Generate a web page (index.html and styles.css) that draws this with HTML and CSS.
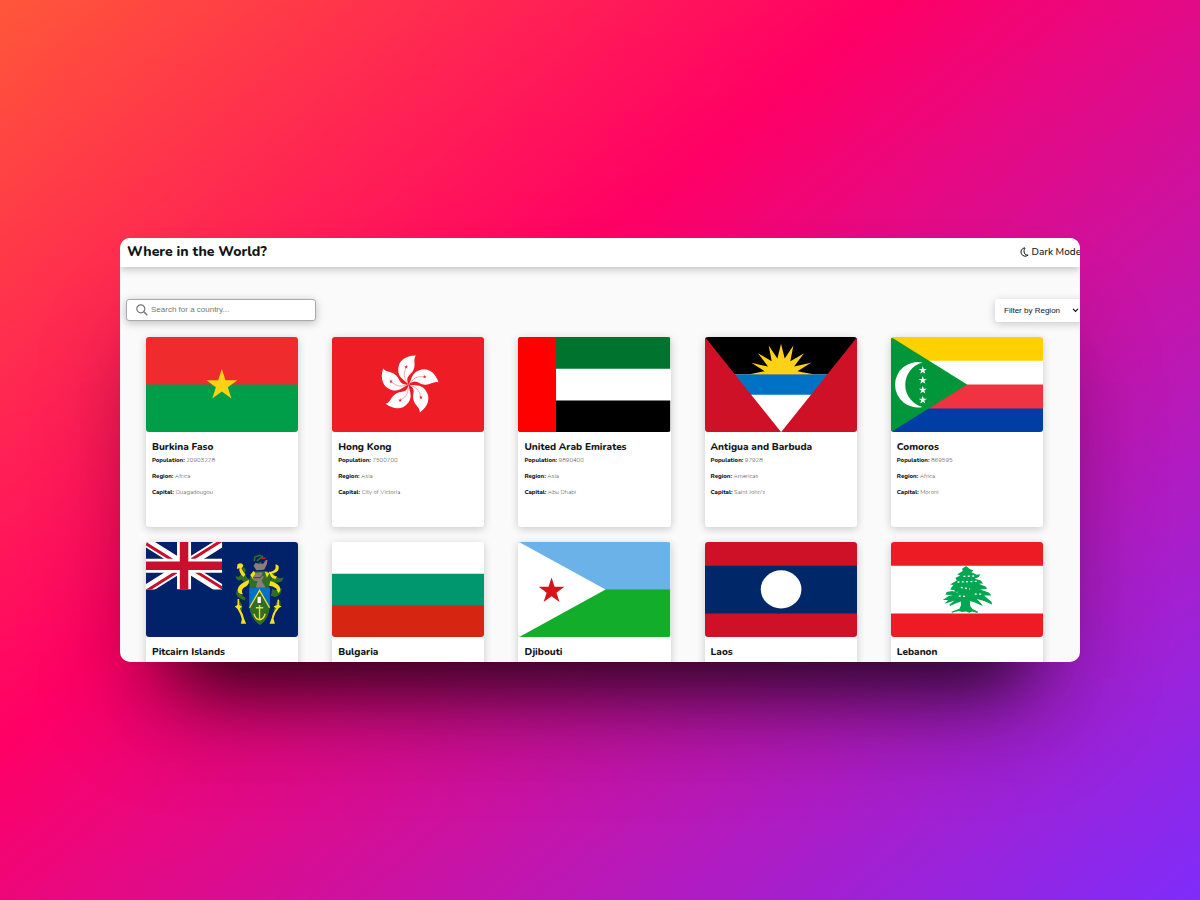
FILE: index.html
```html
<!DOCTYPE html>
<html lang="en">
<head>
<meta charset="utf-8">
<meta name="viewport" content="width=device-width, initial-scale=1">
<title>Where in the World?</title>
<link rel="stylesheet" href="styles.css">
</head>
<body>
<svg class="defs" aria-hidden="true">
  <symbol id="star" viewBox="-10 -10 20 20" overflow="visible">
    <polygon points="0,-10 2.25,-3.1 9.5,-3.1 3.65,1.2 5.9,8.1 0,3.8 -5.9,8.1 -3.65,1.2 -9.5,-3.1 -2.25,-3.1"/>
  </symbol>
</svg>
<div class="window">
  <header class="header">
    <h1 class="title">Where in the World?</h1>
    <button class="mode" type="button">
      <svg class="mode-icon" viewBox="0 0 16 18" aria-hidden="true"><path d="M8 1.500A7.600 7.600 0 1 0 14.500 14.500C8 15.500 5 8 9 2Z" fill="none" stroke="#111517" stroke-width="1.800" stroke-linejoin="round"/></svg>
      Dark Mode
    </button>
  </header>
  <main>
    <form class="controls">
      <label class="search">
        <svg class="search-icon" viewBox="0 0 12 12" aria-hidden="true"><circle cx="4.800" cy="4.800" r="4" fill="none" stroke="#777" stroke-width="1.200"/><path d="M7.800 7.800L11.300 11.300" stroke="#777" stroke-width="1.500"/></svg>
        <input class="search-input" type="text" placeholder="Search for a country..." aria-label="Search for a country">
      </label>
      <div class="filter">
        <select class="filter-select" aria-label="Filter by Region">
          <option>Filter by Region</option><option>Africa</option><option>Americas</option><option>Asia</option><option>Europe</option><option>Oceania</option>
        </select>
        <svg class="filter-arrow" viewBox="0 0 8 6" aria-hidden="true"><path d="M1 1L4 4.200L7 1" fill="none" stroke="#111" stroke-width="1.400"/></svg>
      </div>
    </form>
    <section class="grid">
      <article class="card">
        <svg class="flag" viewBox="0 0 152 95" preserveAspectRatio="none"><path fill="#ef2b2d" d="M0 0H152V48H0Z"/><path fill="#009e49" d="M0 47.500H152V95H0Z"/><use href="#star" x="59.500" y="32" width="32.500" height="32.500" fill="#fcd116"/></svg>
        <div class="info"><h2 class="name">Burkina Faso</h2>
          <p class="fact"><b>Population:</b> 20903278</p><p class="fact"><b>Region:</b> Africa</p><p class="fact"><b>Capital:</b> Ouagadougou</p></div>
      </article>
      <article class="card">
        <svg class="flag" viewBox="0 0 152 95" preserveAspectRatio="none"><path fill="#ee1c25" d="M0 0H152V95H0Z"/>
          <defs><g id="petal"><path fill="#fff" d="M0 0C-3 -4 -10 -6 -10 -14C-10 -23 -3 -28 7 -28C4 -24 7 -20 5 -15C3 -9 -4 -9 0 0Z"/><path d="M0 -1C-5 -6 -5 -11 -2.500 -16" fill="none" stroke="#ee1c25" stroke-width=".35"/><use href="#star" x="-4.300" y="-19" width="4" height="4" fill="#ee1c25"/></g></defs>
          <g transform="translate(76.500 47.500) scale(1.04)"><use href="#petal"/><use href="#petal" transform="rotate(72)"/><use href="#petal" transform="rotate(144)"/><use href="#petal" transform="rotate(216)"/><use href="#petal" transform="rotate(288)"/></g></svg>
        <div class="info"><h2 class="name">Hong Kong</h2>
          <p class="fact"><b>Population:</b> 7500700</p><p class="fact"><b>Region:</b> Asia</p><p class="fact"><b>Capital:</b> City of Victoria</p></div>
      </article>
      <article class="card">
        <svg class="flag" viewBox="0 0 152 95" preserveAspectRatio="none"><path fill="#fff" d="M0 0H152V95H0Z"/><path fill="#00732f" d="M0 0H152V31.600H0Z"/><path d="M0 63.500H152V95H0Z"/><path fill="#f00" d="M0 0H38V95H0Z"/></svg>
        <div class="info"><h2 class="name">United Arab Emirates</h2>
          <p class="fact"><b>Population:</b> 9890400</p><p class="fact"><b>Region:</b> Asia</p><p class="fact"><b>Capital:</b> Abu Dhabi</p></div>
      </article>
      <article class="card">
        <svg class="flag" viewBox="0 0 152 95" preserveAspectRatio="none"><path fill="#fff" d="M0 0H152V95H0Z"/><path d="M0 0H152V37.500H0Z"/><path fill="#0072c6" d="M0 37.400H152V57.700H0Z"/>
          <polygon transform="translate(-194.400 -6.500) scale(.33333)" fill="#fcd116" points="717,131 762,122 722,97 772,108 742,68 783,92 774,45 800,84 811,40 822,84 848,45 839,92 880,68 850,108 901,97 860,122 908,131"/>
          <path fill="#ce1126" d="M0 0L76 95H0ZM152 0L76 95H152Z"/></svg>
        <div class="info"><h2 class="name">Antigua and Barbuda</h2>
          <p class="fact"><b>Population:</b> 97928</p><p class="fact"><b>Region:</b> Americas</p><p class="fact"><b>Capital:</b> Saint John's</p></div>
      </article>
      <article class="card">
        <svg class="flag" viewBox="0 0 152 95" preserveAspectRatio="none"><path fill="#ffd100" d="M0 0H152V24H0Z"/><path fill="#fff" d="M0 23.700H152V48H0Z"/><path fill="#ef3340" d="M0 47.500H152V72H0Z"/><path fill="#003da5" d="M0 71.300H152V95H0Z"/><path fill="#009639" d="M0 0L76 47.500L0 95Z"/>
          <path fill="#fff" d="M31.500 25.500A22.700 22.700 0 1 0 31.500 69.900A22.900 22.900 0 0 1 31.500 25.500Z"/>
          <g fill="#fff"><use href="#star" x="27.500" y="29" width="8.500" height="8.500"/><use href="#star" x="27.500" y="39" width="8.500" height="8.500"/><use href="#star" x="27.500" y="48.700" width="8.500" height="8.500"/><use href="#star" x="27.500" y="58.700" width="8.500" height="8.500"/></g></svg>
        <div class="info"><h2 class="name">Comoros</h2>
          <p class="fact"><b>Population:</b> 869595</p><p class="fact"><b>Region:</b> Africa</p><p class="fact"><b>Capital:</b> Moroni</p></div>
      </article>
      <article class="card">
        <svg class="flag" viewBox="0 0 152 95" preserveAspectRatio="none"><path fill="#012169" d="M0 0H152V95H0Z"/>
          <svg width="76" height="47.500" viewBox="0 0 76 47.500"><path d="M0 0L76 47.500M76 0L0 47.500" stroke="#fff" stroke-width="9.500"/><path d="M-1 1L37 24.750M77 46.500L39 22.750M75 -1L38 22.250M1 48.500L38 25.250" stroke="#c8102e" stroke-width="3"/><path d="M38 0V47.500M0 23.750H76" stroke="#fff" stroke-width="14"/><path d="M38 0V47.500M0 23.750H76" stroke="#c8102e" stroke-width="8.500"/></svg>
          <g transform="translate(79.400 3) scale(.33333)">
            <g fill="#316d24">
              <path d="M50 66Q66 68 58 84Q60 100 74 104L72 116Q56 114 48 104Q34 112 30 94Q44 98 46 88Q52 80 50 66Z"/>
              <path d="M148 78Q142 90 152 94Q162 104 174 96Q172 114 154 112Q138 112 130 118L130 106Q142 102 138 90Z"/>
              <path d="M64 116Q48 122 44 136Q42 148 60 158L58 166Q36 160 32 146Q32 122 64 108ZM40 166Q52 176 50 192L44 204Q40 190 34 182Z"/>
              <path d="M140 132Q156 140 168 128Q170 150 148 156L136 152ZM158 160Q170 172 162 186Q154 188 150 204L144 198Q148 180 158 160Z"/>
            </g>
            <g fill="#f7e017">
              <path d="M36 58Q48 50 54 62L48 70Q52 82 60 88L54 96Q38 82 42 70L34 72Z"/>
              <path d="M150 58Q164 60 158 76Q152 86 140 84Q142 94 154 94L150 102Q132 98 130 80Q144 82 150 70Z"/>
              <path d="M70 112Q68 122 54 128Q46 136 52 148L44 146Q32 140 40 124Q48 114 70 104Z"/>
              <path d="M132 108Q152 112 162 124Q168 136 158 144L152 130Q142 122 130 122Z"/>
              <path d="M36 162H41V180L50 184L43 190Q52 204 56 222L62 236H46L49 222Q44 204 36 192L28 184L36 180Z"/>
              <path d="M156 164H160V180L168 184L160 189Q148 202 144 220L148 236H132L138 220Q142 200 152 190L144 184L155 180Z"/>
            </g>
            <path fill="none" stroke="#316d24" stroke-width="5" d="M86 48L88 36L106 30M94 48L112 32M102 52L114 62"/>
            <path fill="#316d24" d="M72 102L80 80L126 78L136 96L130 128H72Z"/>
            <path fill="#f7e017" d="M74 90L84 78L90 84L84 104ZM118 80L132 84L124 98Z"/>
            <path fill="#897f76" d="M84 62L90 54L112 58L120 46L126 44L124 58L116 74L92 76ZM82 96L92 84L108 82L114 96L108 108L122 130H90L96 108L84 106Z"/>
            <path stroke="#171b26" stroke-width="2" fill="none" d="M84 98L104 98L112 88"/>
            <path fill="#d71920" d="M107 37H119V42H107Z"/>
            <path fill="#0072c6" d="M71 127H133V182C130 214 114 234 103 239C90 232 75 211 71 182Z"/>
            <path fill="#316d24" d="M102 134L132 190C129 216 114 233 103 239C90 232 76 212 72 190Z"/>
            <path fill="none" stroke="#f7e017" stroke-width="4" d="M72 188L102 136L132 188"/>
            <path fill="none" stroke="#f7e017" stroke-width="4" d="M102 180V222M91 188H113M85 206Q90 223 102 224Q114 223 119 206"/>
            <path fill="#fff" d="M96 155H106V174H96Z"/>
          </g></svg>
        <div class="info"><h2 class="name">Pitcairn Islands</h2></div>
      </article>
      <article class="card">
        <svg class="flag" viewBox="0 0 152 95" preserveAspectRatio="none"><path fill="#fff" d="M0 0H152V95H0Z"/><path fill="#00966e" d="M0 31.600H152V64H0Z"/><path fill="#d62612" d="M0 63.300H152V95H0Z"/></svg>
        <div class="info"><h2 class="name">Bulgaria</h2></div>
      </article>
      <article class="card">
        <svg class="flag" viewBox="0 0 152 95" preserveAspectRatio="none"><path fill="#6ab2e7" d="M0 0H152V48H0Z"/><path fill="#12ad2b" d="M0 47.500H152V95H0Z"/><path fill="#fff" d="M0 0H1L87.500 47.500L1 95H0Z"/><use href="#star" x="20" y="35.500" width="27" height="27" fill="#d7141a"/></svg>
        <div class="info"><h2 class="name">Djibouti</h2></div>
      </article>
      <article class="card">
        <svg class="flag" viewBox="0 0 152 95" preserveAspectRatio="none"><path fill="#ce1126" d="M0 0H152V95H0Z"/><path fill="#002868" d="M0 23.700H152V71.300H0Z"/><ellipse cx="76" cy="47.300" rx="20.300" ry="19" fill="#fff"/></svg>
        <div class="info"><h2 class="name">Laos</h2></div>
      </article>
      <article class="card">
        <svg class="flag" viewBox="0 0 152 95" preserveAspectRatio="none"><path fill="#ed1c24" d="M0 0H152V95H0Z"/><path fill="#fff" d="M0 23.700H152V71.300H0Z"/>
          <g transform="translate(-11 -7) scale(.33333)">
            <path fill="#00a651" d="M258 93L270 103L280 106L274 112L290 119L300 118L296 126L284 131L302 136L309 145L296 146L318 155L320 162L300 163L326 172L334 181L312 181L334 200L336 208L312 198L290 192L304 206L308 213L284 202L270 198L270 212L277 222L294 230L292 234L276 229L268 233L258 229L246 231L236 228L216 233L214 230L238 221L243 210L242 199L226 205L210 213L208 209L224 196L194 206L204 195L188 195L206 183L218 180L196 179L200 171L224 166L210 163L220 150L210 148L230 136L226 128L240 122L232 118L248 108L246 101Z"/>
            <path fill="none" stroke="#fff" stroke-width="4" stroke-dasharray="6 7" d="M250 124L282 123M232 141L290 139M242 157L270 162M236 183L260 184M218 166L232 172M284 177L304 177"/>
          </g></svg>
        <div class="info"><h2 class="name">Lebanon</h2></div>
      </article>
    </section>
  </main>
</div>
</body>
</html>
```
FILE: styles.css
```css
* { box-sizing: border-box; }

body {
  margin: 0;
  min-height: 100vh;
  display: flex;
  align-items: center;
  justify-content: center;
  background: linear-gradient(140deg, #ff6432 -6%, #ff0065 39%, #7b2eff 102%);
  color: #111517;
  font-family: Nunito, "Open Sans", sans-serif;
}

h1, h2, p { margin: 0; }

.defs { position: absolute; width: 0; height: 0; }

.window {
  width: 80%;
  aspect-ratio: 960 / 424;
  overflow: hidden;
  border-radius: 10px;
  background: #fafafa;
  box-shadow: 0 80px 70px -64px rgba(0, 0, 0, 0.7), 0 70px 100px -32px rgba(0, 0, 0, 0.45);
}

.header {
  display: flex;
  align-items: center;
  justify-content: space-between;
  height: 29px;
  padding: 0 0 2px 7px;
  background: #fff;
  box-shadow: 0 2px 8px rgba(0, 0, 0, 0.25);
}

.title { font-size: 14px; line-height: 20px; font-weight: 800; }

.mode {
  display: flex;
  align-items: center;
  gap: 2px;
  margin-right: -1px;
  padding: 0;
  border: 0;
  background: none;
  color: inherit;
  font: 500 10px/14px Nunito, "Open Sans", sans-serif;
  white-space: nowrap;
}

.mode-icon { width: 9px; height: 10px; }

.controls {
  display: flex;
  justify-content: space-between;
  margin: 32px -6px 0 6px;
}

.search {
  display: flex;
  align-items: center;
  gap: 3px;
  width: 190px;
  height: 22px;
  padding: 0 9px;
  border: 1px solid #aaa;
  border-radius: 3px;
  background: #fff;
  box-shadow: 0 2px 8px rgba(0, 0, 0, 0.25);
}

.search-icon { width: 12px; height: 12px; flex: none; }

.search-input {
  flex: 1;
  min-width: 0;
  padding: 0;
  border: 0;
  outline: 0;
  background: none;
  font: 8px/12px "Liberation Sans", Arial, sans-serif;
}

.search-input::placeholder { color: #777; }

.filter { position: relative; display: flex; }

.filter-select {
  appearance: none;
  width: 91px;
  height: 23px;
  padding: 0 16px 0 9px;
  border: 0;
  border-radius: 3px;
  background: #fff;
  color: #111517;
  font: 8px/12px "Liberation Sans", Arial, sans-serif;
  box-shadow: 0 2px 8px rgba(0, 0, 0, 0.2);
}

.filter-arrow {
  position: absolute;
  top: 9px;
  right: 7px;
  width: 7px;
  height: 5px;
  pointer-events: none;
}

.grid {
  display: grid;
  grid-template-columns: repeat(5, 1fr);
  gap: 15px 34px;
  padding: 15px 37px 15px 26px;
}

.card {
  min-height: 190px;
  border-radius: 3px;
  background: #fff;
  box-shadow: 0 2px 8px rgba(0, 0, 0, 0.2);
}

.flag {
  display: block;
  width: 100%;
  aspect-ratio: 152 / 95;
  border-radius: 3px;
}

.info { padding: 8px 6px; }

.name { margin-bottom: 2px; font-size: 10px; line-height: 14px; font-weight: 800; }

.fact {
  margin-bottom: 8px;
  color: #555;
  font-size: 6px;
  line-height: 8px;
  font-weight: 300;
}

.fact b { color: #111517; font-weight: 800; }
```
